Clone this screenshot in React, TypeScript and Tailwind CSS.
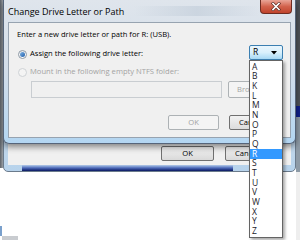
import React from "react";

const font = { fontFamily: '"Open Sans", "Noto Sans", sans-serif' };

function Radio({ checked, disabled }: { checked?: boolean; disabled?: boolean }) {
  return (
    <span
      className={
        "relative flex h-[9px] w-[9px] shrink-0 items-center justify-center rounded-full border " +
        (disabled
          ? "border-[#cfd3d6] bg-[#f4f4f4]"
          : "border-[#8e9aa6] bg-gradient-to-b from-[#e8ebee] to-[#ffffff]")
      }
    >
      {checked && (
        <span className="h-[5px] w-[5px] rounded-full bg-gradient-to-br from-[#7fb4e6] to-[#1f5ea8]" />
      )}
    </span>
  );
}

const letters = ["A", "B", "K", "L", "M", "N", "O", "P", "Q", "R", "S", "T", "U", "V", "W", "X", "Y", "Z"];

export default function App() {
  return (
    <div className="relative h-[240px] w-[300px] overflow-hidden bg-white text-black" style={font}>
      {/* left desktop strip */}
      <div className="absolute left-0 top-0 h-[168px] w-[3px] bg-gradient-to-r from-[#5e6369] to-[#9aa0a6]" />
      <div className="absolute left-0 top-[226px] h-[10px] w-[2px] bg-[#7aa0cc]" />
      <div className="absolute left-[2px] top-[236px] h-[4px] w-[16px] bg-[#c9ccd0]" />
      {/* right desktop strip */}
      <div className="absolute right-0 top-0 h-[106px] w-[4px] bg-[#4e5358]" />
      <div className="absolute right-0 top-[106px] h-[11px] w-[4px] bg-[#10208a]" />
      <div className="absolute right-0 top-[117px] h-[55px] w-[4px] bg-[#8d9aa6]" />
      <div className="absolute right-0 top-[172px] h-[68px] w-[4px] bg-[#eeeeee]" />

      {/* background window */}
      <div className="absolute left-[3px] top-[100px] flex h-[72px] w-[293px] flex-col overflow-hidden rounded-b-[5px] border border-[#6b7b8c] bg-gradient-to-b from-[#cfdbe7] to-[#b7d3ec]">
        <div className="mx-[4px] flex flex-1 flex-col bg-[#f0f0f0]">
          <div className="flex-1" />
          <div className="mb-[4px] flex h-[15px] gap-[11px] pl-[153px]">
            <div className="flex w-[53px] items-center justify-center rounded-[2px] border border-[#707070] bg-gradient-to-b from-[#f2f2f2] to-[#d9d9d9] text-[7.6px]">
              OK
            </div>
            <div className="flex w-[53px] items-center rounded-[2px] border border-[#707070] bg-gradient-to-b from-[#f2f2f2] to-[#d9d9d9] pl-[9px] text-[7.6px]">
              Cancel
            </div>
          </div>
        </div>
        <div className="flex h-[6px] shrink-0 pl-[18px]">
          <div className="h-full w-[211px] bg-gradient-to-b from-[#b7cdea] via-[#4d68b8] to-[#0b1660]" />
        </div>
      </div>

      {/* front dialog */}
      <div className="absolute left-[3px] top-0 flex h-[144px] w-[293px] flex-col rounded-b-[6px] border border-t-0 border-[#56657a] bg-gradient-to-b from-[#dfe5ec] via-[#d2dde9] to-[#b3d6f2] shadow-[0_3px_6px_rgba(0,0,0,0.45)]">
        {/* title bar */}
        <div className="relative flex h-[22px] shrink-0 items-center pl-[4px]">
          <span className="text-[9px] leading-none text-black">Change Drive Letter or Path</span>
          <div className="ml-[10px] h-[10px] flex-1 bg-gradient-to-r from-transparent via-[#c4cfdb] to-transparent opacity-70" />
          <div className="relative mr-[3px] flex h-[14px] w-[32px] self-start items-center justify-center rounded-b-[4px] border border-t-0 border-[#6e2d22] bg-gradient-to-b from-[#e9a597] via-[#d2624c] to-[#c0442c]">
            <svg width="10" height="9" viewBox="0 0 10 9">
              <path d="M2 1.5 L8 7.5 M8 1.5 L2 7.5" stroke="#5a2a22" strokeWidth="3" strokeLinecap="square" />
              <path d="M2 1.5 L8 7.5 M8 1.5 L2 7.5" stroke="#ffffff" strokeWidth="1.6" strokeLinecap="square" />
            </svg>
          </div>
        </div>
        {/* client */}
        <div className="mx-[4px] flex h-[116px] shrink-0 flex-col border border-[#97a3b0] bg-[#f0f0f0] pl-[8px] pt-[8px] text-[7.6px] leading-none">
          <div className="h-[10px]">Enter a new drive letter or path for R: (USB).</div>
          <div className="mt-[8px] flex h-[10px] items-center gap-[3px] pl-[1px]">
            <Radio checked />
            <span>Assign the following drive letter:</span>
          </div>
          <div className="mt-[8px] flex h-[10px] items-center gap-[3px] pl-[1px] text-[#a3a3a3]">
            <Radio disabled />
            <span>Mount in the following empty NTFS folder:</span>
          </div>
          <div className="mt-[4px] flex h-[17px] gap-[6px] pl-[14px]">
            <div className="w-[191px] border border-[#c9cdd1] bg-[#f0f0f0]" />
            <div className="flex w-[53px] items-center rounded-[2px] border border-[#adb2b5] bg-[#f4f4f4] pl-[8px] text-[#a3a3a3]">
              Browse...
            </div>
          </div>
          <div className="mt-[17px] flex h-[15px] gap-[10px] pl-[151px]">
            <div className="flex w-[51px] items-center justify-center rounded-[2px] border border-[#adb2b5] bg-[#f4f4f4] text-[#a3a3a3]">
              OK
            </div>
            <div className="flex w-[52px] items-center rounded-[2px] border border-[#707070] bg-gradient-to-b from-[#f2f2f2] to-[#dcdcdc] pl-[9px]">
              Cancel
            </div>
          </div>
        </div>
      </div>

      {/* combobox */}
      <div className="absolute left-[249px] top-[45px] flex h-[15px] w-[34px] items-center justify-between rounded-[2px] border border-[#3c7fb1] bg-gradient-to-b from-[#eaf6fd] via-[#d9f0fc] to-[#a7d9f5] pl-[3px] pr-[5px] text-[8.5px] leading-none">
        <span>R</span>
        <svg width="6" height="4" viewBox="0 0 6 4">
          <path d="M0 0 H6 L3 3.5 Z" fill="#000" />
        </svg>
      </div>

      {/* dropdown list */}
      <div className="absolute left-[249px] top-[60px] flex h-[178px] w-[34px] flex-col border border-[#646464] bg-white py-[1px] text-[8.5px] leading-none shadow-[2px_2px_3px_rgba(0,0,0,0.35)]">
        {letters.map((l) => (
          <div
            key={l}
            className={
              "flex h-[9.75px] items-center pl-[2px] " +
              (l === "R" ? "bg-[#3399ff] text-white" : "text-[#1a1a2a]")
            }
          >
            {l}
          </div>
        ))}
      </div>
    </div>
  );
}
